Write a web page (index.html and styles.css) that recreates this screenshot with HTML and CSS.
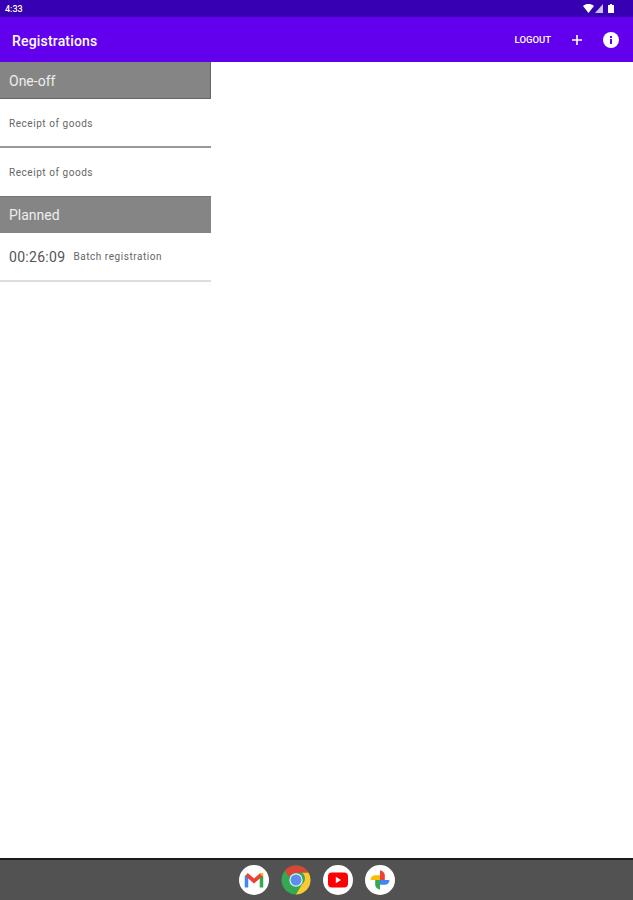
FILE: index.html
```html
<!DOCTYPE html>
<html lang="en">
<head>
<meta charset="utf-8">
<title>Registrations</title>
<link rel="stylesheet" href="styles.css">
</head>
<body>
<div class="screen">
  <div class="statusbar">
    <span class="clock">4:33</span>
    <span class="status-icons">
      <svg width="11" height="9" viewBox="0 0 11 9"><path d="M0 2C3.300 -.6 7.700 -.6 11 2L5.500 9z" fill="#fff"/></svg>
      <svg width="8" height="9" viewBox="0 0 8 9"><path d="M8 0V9H0z" fill="#fff" opacity=".75"/></svg>
      <svg class="battery" width="6" height="9" viewBox="0 0 6 9"><path d="M2 0h2v1h2v8H0V1h2z" fill="#fff"/></svg>
    </span>
  </div>
  <header class="appbar">
    <h1 class="title">Registrations</h1>
    <div class="actions">
      <span class="logout">LOGOUT</span>
      <svg class="plus" width="10" height="10" viewBox="0 0 10 10"><path d="M4.200 0h1.600v4.200H10v1.600H5.800V10H4.200V5.800H0V4.200h4.200z" fill="#fff"/></svg>
      <svg class="info" width="16" height="16" viewBox="0 0 16 16"><circle cx="8" cy="8" r="8" fill="#fff"/><path d="M7 7h2v5H7zM7 4h2v2H7z" fill="#6200ee"/></svg>
    </div>
  </header>
  <main class="content">
    <section class="panel">
      <div class="section-head">One-off</div>
      <div class="row row-strong">Receipt of goods</div>
      <div class="row row-plain">Receipt of goods</div>
      <div class="section-head section-head-planned">Planned</div>
      <div class="row row-light"><span class="time">00:26:09</span><span>Batch registration</span></div>
    </section>
  </main>
  <nav class="dock">
    <svg class="app" width="30" height="30" viewBox="0 0 30 30"><circle cx="15" cy="15" r="15" fill="#fff"/><path d="M7.500 22.500V10.500" stroke="#4285f4" stroke-width="3.500" fill="none"/><path d="M22.500 22.500V10.500" stroke="#34a853" stroke-width="3.500" fill="none"/><path d="M7.500 9.500L15 16l7.500-6.500" stroke="#ea4335" stroke-width="3.800" fill="none"/><path d="M22 8.500l2 1.500" stroke="#fbbc04" stroke-width="2.500" fill="none"/></svg>
    <svg class="app" width="30" height="30" viewBox="0 0 30 30"><circle cx="15" cy="15" r="14.500" fill="#34a853"/><path d="M15 .5a14.500 14.500 0 0 1 12.600 7.300H15a7 7 0 0 0-6.500 4.500L3.800 5.800A14.500 14.500 0 0 1 15 .5z" fill="#db4437"/><path d="M27.600 7.800A14.500 14.500 0 0 1 15 29.500l6-10.300a7 7 0 0 0 0-11.400z" fill="#fcc934"/><circle cx="15" cy="15" r="6.700" fill="#e8eef8"/><circle cx="15" cy="15" r="5.500" fill="#5b8fee"/></svg>
    <svg class="app" width="30" height="30" viewBox="0 0 30 30"><circle cx="15" cy="15" r="15" fill="#fff"/><rect x="5" y="7.500" width="20" height="15" rx="4" fill="#f00"/><path d="M12.800 11.800v6.400l5.200-3.200z" fill="#fff"/></svg>
    <svg class="app" width="30" height="30" viewBox="0 0 30 30"><circle cx="15" cy="15" r="15" fill="#fff"/><path d="M15 15V5.500a4.800 4.800 0 0 1 4.800 4.800V15z" fill="#ea4335"/><path d="M15 15h9.500a4.800 4.800 0 0 1-4.800 4.800H15z" fill="#4285f4"/><path d="M15 15v9.500a4.800 4.800 0 0 1-4.800-4.800V15z" fill="#34a853"/><path d="M15 15H5.500a4.800 4.800 0 0 1 4.800-4.800H15z" fill="#fbbc04"/></svg>
  </nav>
</div>
</body>
</html>
```
FILE: styles.css
```css
* { box-sizing: border-box; }
html, body { margin: 0; padding: 0; }
body { font-family: Roboto, "Liberation Sans", sans-serif; background: #fff; }
.screen { width: 633px; height: 900px; display: flex; flex-direction: column; overflow: hidden; }
.statusbar { height: 17px; flex: none; background: #3700b3; color: #fff; display: flex; align-items: center; justify-content: space-between; padding: 0 19px 0 5px; }
.clock { font-size: 9px; font-weight: 500; }
.status-icons { display: flex; align-items: center; gap: 1px; }
.battery { margin-left: 4px; }
.appbar { height: 45px; flex: none; background: #6200ee; color: #fff; display: flex; align-items: center; justify-content: space-between; padding: 0 14px 0 12px; }
.title { margin: 0; padding-top: 2px; font-size: 14px; font-weight: 500; letter-spacing: .18px; }
.actions { display: flex; align-items: center; }
.logout { font-size: 9.500px; font-weight: 500; margin-right: 21px; }
.plus { margin-right: 21px; }
.content { flex: 1; min-height: 0; }
.panel { width: 211px; }
.section-head { height: 37px; background: #858585; color: #eee; font-size: 14px; display: flex; align-items: center; padding: 1px 0 0 9px; border-right: 1px solid #666; border-bottom: 1px solid #666; }
.section-head-planned { padding-top: 0; border-bottom: 0; border-right: 0; border-top: 1px solid #777; }
.row { display: flex; align-items: center; padding-left: 9px; font-size: 10px; letter-spacing: .55px; color: #666; }
.row-strong { height: 49px; padding-top: 1px; border-bottom: 2px solid #999; }
.row-plain { height: 48px; }
.row-light { height: 49px; border-bottom: 2px solid #ddd; }
.time { font-size: 14px; color: #555; margin-right: 8px; letter-spacing: .3px; }
.dock { height: 42px; flex: none; background: #525252; border-top: 2px solid #1a1a1a; display: flex; align-items: center; justify-content: center; gap: 12px; padding-left: 1px; }
.app { flex: none; }
```
